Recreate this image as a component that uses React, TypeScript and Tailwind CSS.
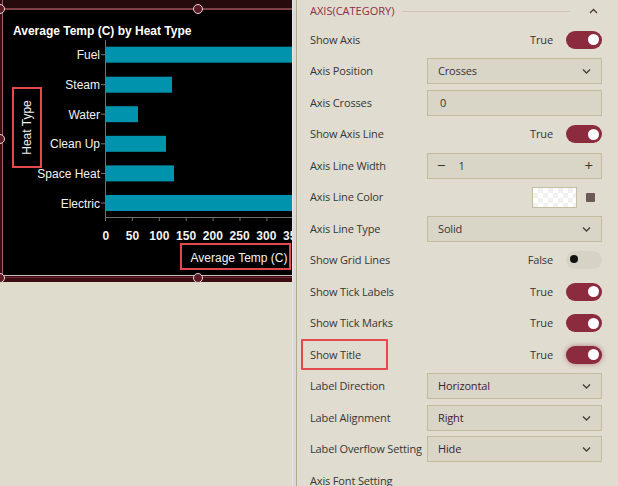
import React from 'react';

const bars = [
  { name: 'Fuel', y: 46.7, w: 200 },
  { name: 'Steam', y: 76.7, w: 66 },
  { name: 'Water', y: 106.2, w: 32 },
  { name: 'Clean Up', y: 135.8, w: 60 },
  { name: 'Space Heat', y: 165.4, w: 68 },
  { name: 'Electric', y: 195, w: 200 },
];

const ticks = [0, 50, 100, 150, 200, 250, 300, 350];

const Chevron = ({ up }: { up?: boolean }) => (
  <svg width="9" height="6" viewBox="0 0 9 6" className="shrink-0">
    <path
      d={up ? 'M1 5L4.5 1.5L8 5' : 'M1 1.5L4.5 5L8 1.5'}
      fill="none"
      stroke="#4a3a3a"
      strokeWidth="1.3"
    />
  </svg>
);

const Handle = ({ className }: { className: string }) => (
  <div
    className={`absolute h-[10px] w-[10px] -translate-x-1/2 -translate-y-1/2 rounded-full border-[1.5px] border-[#ecd6d6] bg-[#5c1a24] ${className}`}
  />
);

function Chart() {
  return (
    <div className="relative h-[282px] w-[292px] bg-black">
      <svg width="292" height="282" className="block" style={{ fontFamily: '"Liberation Sans", Arial, sans-serif' }}>
        <text x="13" y="35" fill="#ffffff" fontSize="12" fontWeight="bold">
          Average Temp (C) by Heat Type
        </text>

        {bars.map((b) => (
          <g key={b.name}>
            <rect x="106" y={b.y} width={b.w} height="16" fill="#0093ad" />
            <line x1="101" x2="105" y1={b.y + 8} y2={b.y + 8} stroke="#777" />
            <text x="100" y={b.y + 12.6} fill="#f2f2f2" fontSize="12" textAnchor="end">
              {b.name}
            </text>
          </g>
        ))}

        <line x1="105.5" x2="105.5" y1="40" y2="221" stroke="#6f6f6f" />
        <line x1="105" x2="292" y1="217.5" y2="217.5" stroke="#6f6f6f" />
        {ticks.map((t, i) => (
          <g key={t}>
            <line x1={105.5 + i * 26.9} x2={105.5 + i * 26.9} y1="217" y2="221" stroke="#6f6f6f" />
            <text x={105.8 + i * 26.75} y="239.5" fill="#f2f2f2" fontSize="12" fontWeight="bold" textAnchor="middle">
              {t}
            </text>
          </g>
        ))}

        <text x="239" y="261.5" fill="#f2f2f2" fontSize="12" textAnchor="middle">
          Average Temp (C)
        </text>
        <rect x="181" y="244" width="109" height="25" fill="none" stroke="#e5484d" strokeWidth="2" />

        <text transform="translate(30.5,127.5) rotate(-90)" fill="#f2f2f2" fontSize="12" textAnchor="middle">
          Heat Type
        </text>
        <rect x="13" y="88" width="28" height="79" fill="none" stroke="#e5484d" strokeWidth="2" />
      </svg>

      {/* selection frame */}
      <div className="absolute inset-x-0 top-0 h-[8px] bg-[#260b0d]" />
      <div className="absolute inset-x-0 top-[8px] h-[2px] bg-[#7e3f45]" />
      <div className="absolute inset-y-0 left-0 w-[2px] bg-[#3a0d12]" />
      <div className="absolute inset-y-0 left-[2px] w-[1px] bg-[#9b6066]" />
      <div className="absolute inset-x-0 top-[275px] h-[1px] bg-[#c4c0c0]" />
      <div className="absolute inset-x-0 top-[276px] h-[6px] bg-[#3c0c13]" />
      <div className="absolute inset-x-0 top-[277px] h-[1px] bg-[#6e2630]" />
      <Handle className="left-0 top-[9px]" />
      <Handle className="left-[198px] top-[9px]" />
      <Handle className="left-0 top-[139px]" />
      <Handle className="left-0 top-[278px]" />
      <Handle className="left-[198px] top-[278px]" />
    </div>
  );
}

function Toggle({ on, glow }: { on: boolean; glow?: boolean }) {
  if (!on) {
    return (
      <div className="flex h-[18px] w-[36px] items-center rounded-full bg-[#d6d2c5] pl-[4px]">
        <div className="-mt-[3px] h-[8px] w-[8px] rounded-full bg-[#111]" />
      </div>
    );
  }
  return (
    <div
      className={`flex h-[18px] w-[36px] items-center justify-end rounded-full bg-[#8d2b3e] pr-[3px] ${
        glow ? 'shadow-[0_0_5px_rgba(141,43,62,0.55)]' : ''
      }`}
    >
      <div className="h-[11px] w-[11px] rounded-full bg-white" />
    </div>
  );
}

const Row = ({ label, children, boxed }: { label: string; children?: React.ReactNode; boxed?: boolean }) => (
  <div className="relative flex h-[31.5px] items-center pr-[16px]">
    <span className="w-[117px] shrink-0 whitespace-nowrap">{label}</span>
    <div className="flex flex-1 items-center justify-end">{children}</div>
    {boxed && (
      <div className="pointer-events-none absolute left-[-9px] top-0 h-[31px] w-[87px] rounded-[1px] border-2 border-solid border-[#e5484d]" />
    )}
  </div>
);

const BoolField = ({ on, glow }: { on: boolean; glow?: boolean }) => (
  <div className="flex items-center gap-[13px]">
    <span>{on ? 'True' : 'False'}</span>
    <Toggle on={on} glow={glow} />
  </div>
);

const Select = ({ value, accent }: { value: string; accent?: boolean }) => (
  <div className="flex h-[26px] w-[175px] items-center justify-between border border-[#c2bb9c] bg-[#d9d5c7] pl-[10px] pr-[10px]">
    <span className={accent ? 'text-[#3e1c36]' : ''}>{value}</span>
    <Chevron />
  </div>
);

export default function App() {
  return (
    <div className="flex h-[486px] w-[618px] overflow-hidden bg-[#dfdbcd]">
      <div className="w-[292px] shrink-0">
        <Chart />
      </div>
      <div className="w-[4px] shrink-0 border-l border-[#e6e6e6] bg-[#d9d9d9]" />
      <div
        className="flex-1 border-l border-[#b3ab8a] bg-[#e0dccf] pl-[13px] text-[11px] tracking-[-0.15px] text-[#363636]"
        style={{ fontFamily: '"Open Sans", "Noto Sans", sans-serif' }}
      >
        <div className="flex h-[24px] items-center pr-[20px] pb-[2px]">
          <span className="text-[11px] tracking-normal text-[#8f2d4a]">AXIS(CATEGORY)</span>
          <div className="ml-[8px] h-px flex-1 bg-[#d7bfbf]" />
          <div className="ml-[19px]">
            <Chevron up />
          </div>
        </div>

        <Row label="Show Axis">
          <BoolField on />
        </Row>
        <Row label="Axis Position">
          <Select value="Crosses" />
        </Row>
        <Row label="Axis Crosses">
          <div className="flex h-[26px] w-[175px] items-center border border-[#c2bb9c] bg-[#d9d5c7] pl-[12px]">0</div>
        </Row>
        <Row label="Show Axis Line">
          <BoolField on />
        </Row>
        <Row label="Axis Line Width">
          <div className="flex h-[26px] w-[175px] items-center border border-[#c2bb9c] bg-[#d9d5c7] pl-[9px] pr-[8px]">
            <span className="text-[15px] leading-none">−</span>
            <span className="ml-[13px] flex-1">1</span>
            <span className="text-[15px] leading-none">+</span>
          </div>
        </Row>
        <Row label="Axis Line Color">
          <div className="flex items-center gap-[9px] pr-[7px]">
            <div className="h-[21px] w-[45px] border-[1.5px] border-[#c6bf9f] bg-[conic-gradient(#f1f1f1_25%,#ffffff_0_50%,#f1f1f1_0_75%,#ffffff_0)] bg-[length:10px_10px]" />
            <div className="h-[9px] w-[9px] rounded-[1px] bg-[#6b5a58]" />
          </div>
        </Row>
        <Row label="Axis Line Type">
          <Select value="Solid" />
        </Row>
        <Row label="Show Grid Lines">
          <BoolField on={false} />
        </Row>
        <Row label="Show Tick Labels">
          <BoolField on />
        </Row>
        <Row label="Show Tick Marks">
          <BoolField on />
        </Row>
        <Row label="Show Title" boxed>
          <BoolField on glow />
        </Row>
        <Row label="Label Direction">
          <Select value="Horizontal" accent />
        </Row>
        <Row label="Label Alignment">
          <Select value="Right" accent />
        </Row>
        <Row label="Label Overflow Setting">
          <Select value="Hide" accent />
        </Row>
        <Row label="Axis Font Setting" />
      </div>
    </div>
  );
}
